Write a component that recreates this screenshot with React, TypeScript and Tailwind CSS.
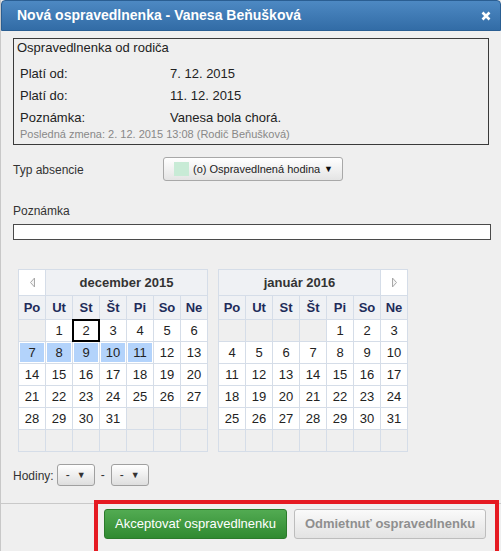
import React from "react";

type Cell = { d?: number; sel?: boolean; today?: boolean };

const FONT = { fontFamily: '"Liberation Sans", Arial, sans-serif' };

const days = ["Po", "Ut", "St", "Št", "Pi", "So", "Ne"];

function buildMonth(offset: number, count: number, sel: number[] = [], today?: number) {
  const cells: Cell[] = [];
  for (let i = 0; i < offset; i++) cells.push({});
  for (let d = 1; d <= count; d++) cells.push({ d, sel: sel.includes(d), today: today === d });
  while (cells.length < 42) cells.push({});
  return cells;
}

const dec = buildMonth(1, 31, [7, 8, 9, 10, 11], 2);
const jan = buildMonth(4, 31);

function Arrow({ dir }: { dir: "left" | "right" }) {
  return (
    <svg width="7" height="11" viewBox="0 0 7 11">
      {dir === "left" ? (
        <polygon points="5.5,1 1.5,5.5 5.5,10" fill="#f4f4f4" stroke="#a8a8a8" strokeWidth="1" />
      ) : (
        <polygon points="1.5,1 5.5,5.5 1.5,10" fill="#f4f4f4" stroke="#a8a8a8" strokeWidth="1" />
      )}
    </svg>
  );
}

function Calendar({ title, cells, prev, next }: { title: string; cells: Cell[]; prev?: boolean; next?: boolean }) {
  return (
    <div className="grid grid-cols-[repeat(7,26px)] gap-px p-px bg-[#d5dde8]">
      {prev && (
        <div className="h-[25px] bg-white flex items-center justify-center">
          <Arrow dir="left" />
        </div>
      )}
      <div className="col-span-6 h-[25px] bg-[#eff1f4] flex items-center justify-center text-[13px] font-bold text-[#333]">
        {title}
      </div>
      {next && (
        <div className="h-[25px] bg-white flex items-center justify-center">
          <Arrow dir="right" />
        </div>
      )}
      {days.map((d) => (
        <div key={d} className="h-[23px] bg-[#eff1f4] flex items-center justify-center text-[13px] font-bold text-[#1e2c5a]">
          {d}
        </div>
      ))}
      {cells.map((c, i) => (
        <div
          key={i}
          className={
            "h-[21px] flex items-center justify-center text-[13px] text-[#222] " +
            (c.d === undefined
              ? "bg-[#efefef]"
              : c.sel
              ? "bg-[#b3d3fb] border border-white"
              : c.today
              ? "bg-white border border-black outline outline-1 outline-black"
              : "bg-white")
          }
        >
          {c.d}
        </div>
      ))}
    </div>
  );
}

function SmallSelect() {
  return (
    <div className="w-[38px] h-[22px] border border-[#a0a0a0] rounded-[3px] bg-gradient-to-b from-white to-[#dedede] flex items-center justify-center gap-[7px] text-[12px] text-[#333]">
      <span>-</span>
      <span className="text-[9px] leading-none">▼</span>
    </div>
  );
}

export default function App() {
  return (
    <div className="w-[501px] h-[551px] bg-[#efefef] relative overflow-hidden border-l border-[#c8c8c8]" style={FONT}>
      {/* header */}
      <div className="h-[31px] rounded-t-[4px] border border-[#2a5e92] bg-gradient-to-b from-[#4d89c3] to-[#326ca6] flex items-center justify-between pl-[15px] pr-[9px]">
        <span className="text-white font-bold text-[14px]">Nová ospravedlnenka - Vanesa Beňušková</span>
        <svg width="10" height="10" viewBox="0 0 10 10">
          <path d="M1.5 1.5 L8.5 8.5 M8.5 1.5 L1.5 8.5" stroke="white" strokeWidth="2.6" />
        </svg>
      </div>

      <div className="px-[12px]">
        {/* info box */}
        <div className="mt-[7px] border border-[#3a3a3a] h-[107px] text-[13px] text-[#222]">
          <div className="h-[17px] flex items-center pl-[3px]">Ospravedlnenka od rodiča</div>
          <div className="mt-[6px] h-[23px] flex items-center pl-[6px]">
            <span className="w-[150px]">Platí od:</span>
            <span>7. 12. 2015</span>
          </div>
          <div className="h-[22px] flex items-center pl-[6px]">
            <span className="w-[150px]">Platí do:</span>
            <span>11. 12. 2015</span>
          </div>
          <div className="h-[21px] flex items-center pl-[6px]">
            <span className="w-[150px]">Poznámka:</span>
            <span>Vanesa bola chorá.</span>
          </div>
          <div className="h-[13px] flex items-center pl-[6px] text-[11px] text-[#888]">
            Posledná zmena: 2. 12. 2015 13:08 (Rodič Beňušková)
          </div>
        </div>

        {/* typ absencie */}
        <div className="mt-[12px] flex items-center h-[24px]">
          <span className="w-[150px] text-[12px] text-[#333] pt-[2px]">Typ absencie</span>
          <div className="h-[24px] w-[180px] border border-[#a8a8a8] rounded-[3px] bg-gradient-to-b from-white to-[#e4e4e4] flex items-center pl-[10px] pr-[9px] whitespace-nowrap">
            <span className="w-[15px] h-[14px] shrink-0 bg-[#c8ebd6]" />
            <span className="ml-[4px] text-[11px] text-[#222]">(o) Ospravedlnená hodina</span>
            <span className="ml-auto text-[9px] leading-none text-[#111]">▼</span>
          </div>
        </div>

        {/* poznamka */}
        <div className="mt-[22px] h-[16px] flex items-center text-[12px] text-[#333]">Poznámka</div>
        <div className="mt-[5px] h-[16px] w-[478px] bg-white border border-[#4a4a4a]" />

        {/* calendars */}
        <div className="mt-[29px] ml-[5px] flex gap-[10px]">
          <Calendar title="december 2015" cells={dec} prev />
          <Calendar title="január 2016" cells={jan} next />
        </div>

        {/* hodiny */}
        <div className="mt-[12px] flex items-center gap-[2px] text-[12px] text-[#333]">
          <span className="mr-[1px] pt-[2px]">Hodiny:</span>
          <SmallSelect />
          <span className="mx-[4px]">-</span>
          <SmallSelect />
        </div>
      </div>

      {/* footer */}
      <div className="mt-[17px] border-t border-[#c9c9c9] pt-[5px] pr-[15px] flex justify-end gap-[7px]">
        <button className="h-[30px] w-[183px] rounded-[3px] border border-[#2b7a2b] bg-gradient-to-b from-[#52ab52] to-[#2f8a30] text-white text-[13px]">
          Akceptovať ospravedlnenku
        </button>
        <button className="h-[30px] w-[192px] rounded-[3px] border border-[#bdbdbd] bg-gradient-to-b from-[#fafafa] to-[#e3e3e3] text-[#8f8f8f] font-bold text-[13px]">
          Odmietnuť ospravedlnenku
        </button>
      </div>

      {/* highlight overlay */}
      <div className="absolute left-[93px] top-[500px] w-[405px] h-[60px] border-4 border-[#e51a22] pointer-events-none" />
    </div>
  );
}
